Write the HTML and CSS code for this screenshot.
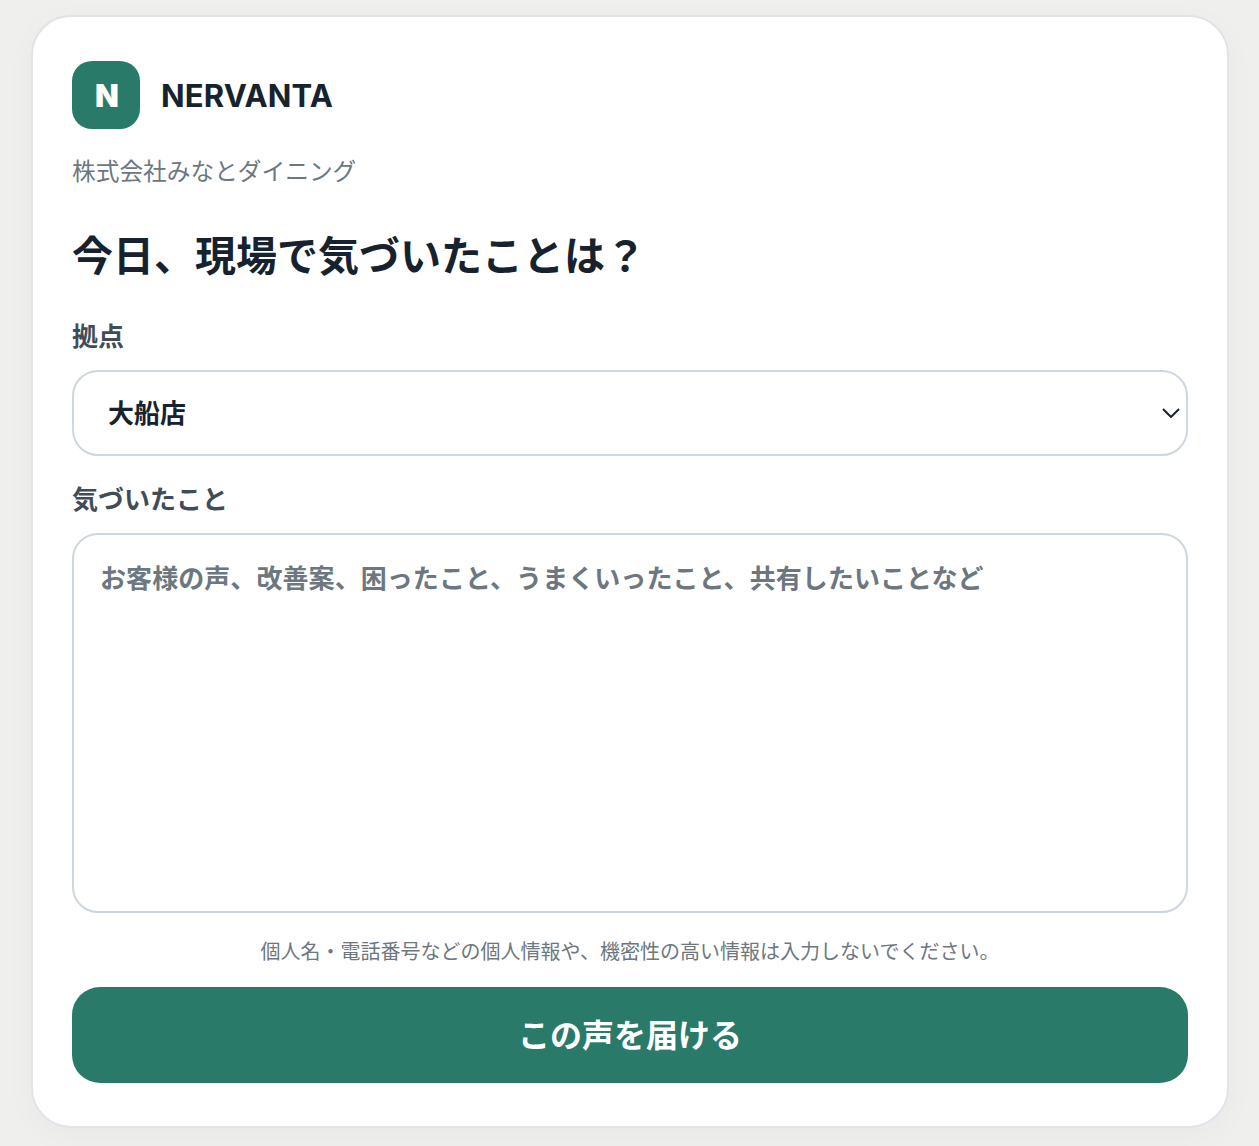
FILE: index.html
```html
<!DOCTYPE html>
<html lang="ja">
<head>
    <meta charset="UTF-8">
    <meta name="viewport" content="width=device-width, initial-scale=1.0">
    <title>NERVANTA</title>
    <link rel="stylesheet" href="styles.css">
</head>
<body>
    <main class="card">
        <div class="brand">
            <div class="brand-mark">N</div>
            <span class="brand-name">NERVANTA</span>
        </div>
        <p class="company">株式会社みなとダイニング</p>
        <h1>今日、現場で気づいたことは？</h1>
        <form class="voice-form">
            <label class="field-label" for="site">拠点</label>
            <div class="select-wrap">
                <select id="site" name="site">
                    <option>大船店</option>
                </select>
                <svg class="chevron" viewBox="0 0 18 10" width="18" height="10" fill="none" stroke="#16222e" stroke-width="2">
                    <path d="M1 1l8 8 8-8"/>
                </svg>
            </div>
            <label class="field-label note-label" for="note">気づいたこと</label>
            <textarea id="note" name="note" placeholder="お客様の声、改善案、困ったこと、うまくいったこと、共有したいことなど"></textarea>
            <p class="caution">個人名・電話番号などの個人情報や、機密性の高い情報は入力しないでください。</p>
            <button type="submit">この声を届ける</button>
        </form>
    </main>
</body>
</html>
```

FILE: styles.css
```css
* {
    box-sizing: border-box;
    padding: 0;
    margin: 0;
}
body {
    min-height: 1146px;
    padding: 15px 30px 18px 31px;
    background: #eff0ee;
    font-family: Inter, "Noto Sans CJK JP", sans-serif;
    color: #16222e;
}
.card {
    height: 1113px;
    padding: 44px 39px 0;
    background: #fff;
    border: 2px solid #e0e4e9;
    border-radius: 40px;
    box-shadow: 0 8px 32px rgba(22, 34, 46, 0.03);
}
.brand {
    display: flex;
    align-items: center;
    gap: 21px;
}
.brand-mark {
    width: 68px;
    height: 68px;
    padding-left: 2px;
    display: flex;
    align-items: center;
    justify-content: center;
    background: #2a7a6a;
    border-radius: 20px;
    color: #fff;
    font-size: 31px;
    font-weight: 900;
}
.brand-name {
    font-size: 31px;
    font-weight: 700;
    letter-spacing: 0.15px;
}
.company {
    margin-top: 26px;
    font-size: 23.7px;
    line-height: 34px;
    color: #6c7780;
}
h1 {
    margin-top: 39px;
    font-size: 41px;
    line-height: 56px;
    font-weight: 700;
}
.voice-form {
    display: flex;
    flex-direction: column;
}
.field-label {
    margin-top: 36px;
    font-size: 26px;
    line-height: 34px;
    font-weight: 700;
    color: #414c57;
}
.note-label {
    margin-top: 27px;
}
.select-wrap {
    position: relative;
    margin-top: 16px;
}
select {
    display: block;
    width: 100%;
    height: 86px;
    padding: 0 34px;
    appearance: none;
    background: #fff;
    border: 2px solid #cfd7de;
    border-radius: 26px;
    font-family: inherit;
    font-size: 26px;
    font-weight: 700;
    color: #16222e;
    outline: none;
}
.chevron {
    position: absolute;
    top: 38px;
    right: 8px;
}
textarea {
    display: block;
    width: 100%;
    height: 380px;
    margin-top: 16px;
    padding: 25px 26px;
    resize: none;
    border: 2px solid #cfd7de;
    border-radius: 26px;
    font-family: inherit;
    font-size: 26px;
    line-height: 38px;
    font-weight: 700;
    letter-spacing: 0.07px;
    outline: none;
}
textarea::placeholder {
    color: #6c7780;
    opacity: 1;
}
.caution {
    margin-top: 22px;
    text-align: center;
    font-size: 20px;
    line-height: 34px;
    color: #6c7780;
}
button {
    height: 96px;
    margin-top: 18px;
    padding-bottom: 4px;
    background: #2a7a6a;
    border: none;
    border-radius: 28px;
    font-family: inherit;
    font-size: 32px;
    font-weight: 700;
    color: #fff;
}
```
